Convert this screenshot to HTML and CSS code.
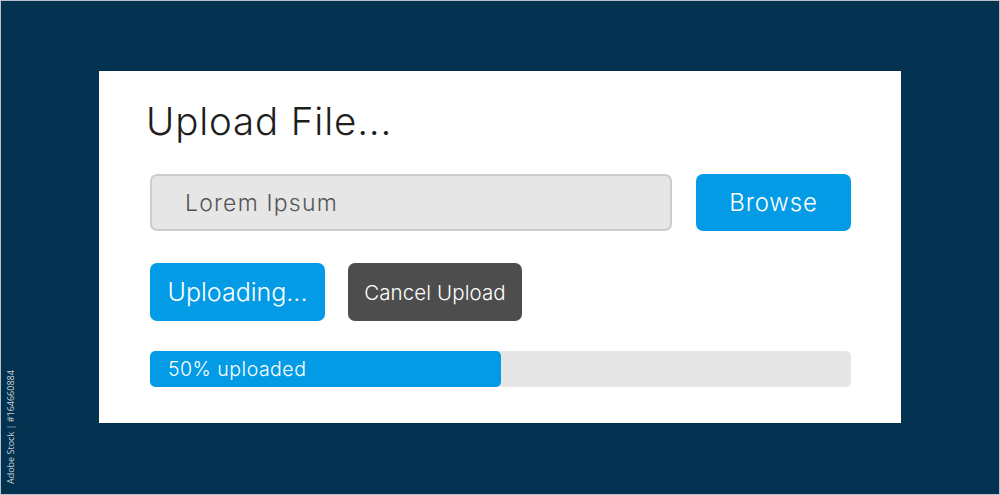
FILE: index.html
```html
<!DOCTYPE html>
<html>
<head>
<meta charset="utf-8">
<link rel="stylesheet" href="styles.css">
</head>
<body>
<div class="stage">
  <div class="panel">
    <h1 class="title">Upload File...</h1>
    <div class="row">
      <div class="field">Lorem Ipsum</div>
      <div class="btn btn-blue btn-browse">Browse</div>
    </div>
    <div class="row row-actions">
      <div class="btn btn-blue btn-uploading">Uploading...</div>
      <div class="btn btn-dark btn-cancel">Cancel Upload</div>
    </div>
    <div class="progress">
      <div class="progress-fill" style="width:50%">50% uploaded</div>
    </div>
  </div>
  <div class="credit">Adobe Stock | #164660884</div>
</div>
</body>
</html>
```
FILE: styles.css
```css
* { box-sizing: border-box; }
html, body { margin: 0; padding: 0; }
body {
  width: 1000px;
  height: 495px;
  background: #02324f;
  font-family: Inter, "Open Sans", sans-serif;
  font-weight: 300;
  overflow: hidden;
}
.stage {
  position: relative;
  width: 1000px;
  height: 495px;
  padding-top: 71px;
  padding-left: 99px;
  border: 1px solid #b8c2c8;
}
.panel {
  width: 802px;
  height: 352px;
  margin-top: -1px;
  margin-left: -1px;
  background: #ffffff;
  padding: 27px 50px 0 51px;
}
.title {
  margin: 0 0 30px -4px;
  font-weight: 300;
  font-size: 38.5px;
  line-height: 46px;
  color: #1e1e1e;
  letter-spacing: 0.85px;
}
.row {
  display: flex;
  align-items: stretch;
  gap: 24px;
  height: 57px;
}
.field {
  flex: 0 0 522px;
  background: #e6e6e6;
  border: 2px solid #cccccc;
  border-radius: 7px;
  padding-left: 33px;
  display: flex;
  align-items: center;
  font-size: 23px;
  letter-spacing: 1.2px;
  color: #555555;
}
.btn {
  display: flex;
  align-items: center;
  justify-content: center;
  border-radius: 7px;
  color: #ffffff;
}
.btn-blue { background: #039be5; }
.btn-dark { background: #4d4d4d; }
.btn-browse { flex: 0 0 155px; font-size: 24px; letter-spacing: 0.8px; }
.row-actions {
  margin-top: 32px;
  height: 58px;
  gap: 23px;
}
.btn-uploading { flex: 0 0 175px; font-size: 25px; letter-spacing: 0; }
.btn-cancel { flex: 0 0 174px; font-size: 20.5px; letter-spacing: 0.1px; }
.progress {
  margin-top: 30px;
  height: 36px;
  width: 701px;
  background: #e6e6e6;
  border-radius: 5px;
  overflow: hidden;
}
.progress-fill {
  height: 100%;
  background: #039be5;
  border-radius: 5px;
  color: #ffffff;
  font-size: 19.5px;
  letter-spacing: 0.5px;
  display: flex;
  align-items: center;
  padding-left: 18px;
  white-space: nowrap;
}
.credit {
  position: absolute;
  left: 4px;
  bottom: 10px;
  transform-origin: left bottom;
  transform: rotate(-90deg) translate(0, 12px);
  font-family: "Open Sans", sans-serif;
  font-weight: 400;
  font-size: 9px;
  color: #c8d0d6;
  white-space: nowrap;
}
```
